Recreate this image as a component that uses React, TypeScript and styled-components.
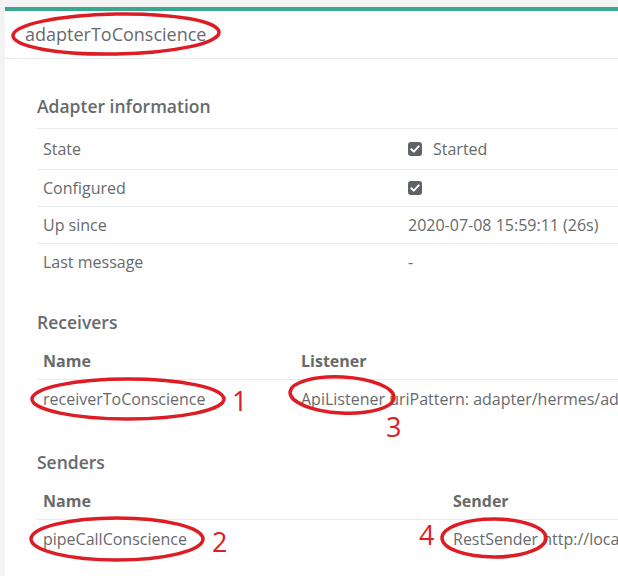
import styled, { createGlobalStyle } from 'styled-components';

const GlobalStyle = createGlobalStyle`
  html, body {
    margin: 0;
    padding: 0;
    background: #f3f3f4;
    overflow: hidden;
  }
  body {
    font-family: "Open Sans", "Liberation Sans", sans-serif;
    color: #676a6c;
  }
`;

const Page = styled.div`
  position: relative;
  display: flex;
  flex-direction: column;
  width: 618px;
  height: 576px;
  padding: 7px 0 0 5px;
  box-sizing: border-box;
  overflow: hidden;
`;

const Panel = styled.div`
  flex: 1;
  width: 760px;
  background: #fff;
  border-top: 4px solid #38a98e;
`;

const PanelHeader = styled.div`
  padding: 12px 20px 12px;
  border-bottom: 1px solid #e7eaec;
`;

const PanelTitle = styled.h5`
  margin: 0;
  font-size: 18px;
  font-weight: 400;
  line-height: 23px;
`;

const Content = styled.div`
  padding: 35px 0 0 32px;
`;

const Section = styled.section<{ $gap: number }>`
  margin-bottom: ${(p) => p.$gap}px;
`;

const Heading = styled.h4`
  margin: 0 0 10px;
  font-size: 17.5px;
  font-weight: 600;
  line-height: 24px;
`;

const Table = styled.table`
  border-collapse: collapse;
  table-layout: fixed;
  width: 700px;
  font-size: 16px;
  white-space: nowrap;
`;

const Th = styled.th<{ $w?: number }>`
  text-align: left;
  font-weight: 700;
  padding: 7px 6px 8px;
  line-height: 20px;
  border-bottom: 1px solid #e7eaec;
  width: ${(p) => (p.$w ? `${p.$w}px` : 'auto')};
`;

const Td = styled.td<{ $w?: number; $pad?: number }>`
  padding: ${(p) => p.$pad ?? 8}px 6px;
  line-height: 20px;
  height: 20px;
  border-top: 1px solid #e7eaec;
  vertical-align: middle;
  overflow: hidden;
  width: ${(p) => (p.$w ? `${p.$w}px` : 'auto')};
`;

const BodyTd = styled(Td)`
  border-top: none;
  padding: 9px 6px;
`;

const CheckWrap = styled.span`
  display: inline-flex;
  align-items: center;
  gap: 11px;
  height: 20px;
  vertical-align: top;
`;

const Box = styled.span`
  display: inline-flex;
  align-items: center;
  justify-content: center;
  width: 14px;
  height: 14px;
  border-radius: 3px;
  background: #5f6266;
`;

const Overlay = styled.svg`
  position: absolute;
  left: 0;
  top: 0;
  pointer-events: none;
`;

const Mark = styled.span<{ $x: number; $y: number }>`
  position: absolute;
  left: ${(p) => p.$x}px;
  top: ${(p) => p.$y}px;
  font-family: "Open Sans", "Liberation Sans", sans-serif;
  font-size: 27px;
  line-height: 1;
  color: #dd1c24;
`;

const Check = ({ label }: { label?: string }) => (
  <CheckWrap>
    <Box>
      <svg width="10" height="8" viewBox="0 0 10 8">
        <path d="M1.3 4.2 L3.8 6.6 L8.7 1.4" fill="none" stroke="#fff" strokeWidth="2" strokeLinecap="round" strokeLinejoin="round" />
      </svg>
    </Box>
    {label}
  </CheckWrap>
);

const info = [
  { key: 'State', value: <Check label="Started" />, pad: 10 },
  { key: 'Configured', value: <Check />, pad: 8 },
  { key: 'Up since', value: '2020-07-08 15:59:11 (26s)', pad: 8 },
  { key: 'Last message', value: '-', pad: 8 },
];

const ellipses = [
  { cx: 116, cy: 34, rx: 103, ry: 20, rot: -1 },
  { cx: 128, cy: 399, rx: 96, ry: 20, rot: 0 },
  { cx: 342, cy: 395, rx: 52, ry: 18, rot: 3 },
  { cx: 117, cy: 539, rx: 86, ry: 21, rot: 0 },
  { cx: 494, cy: 538, rx: 52, ry: 19, rot: 0 },
];

const App = () => (
  <>
    <GlobalStyle />
    <Page>
      <Panel>
        <PanelHeader>
          <PanelTitle>adapterToConscience</PanelTitle>
        </PanelHeader>
        <Content>
          <Section $gap={30}>
            <Heading>Adapter information</Heading>
            <Table>
              <tbody>
                {info.map((row) => (
                  <tr key={row.key}>
                    <Td $w={353} $pad={row.pad}>{row.key}</Td>
                    <Td $pad={row.pad}>{row.value}</Td>
                  </tr>
                ))}
              </tbody>
            </Table>
          </Section>
          <Section $gap={32}>
            <Heading>Receivers</Heading>
            <Table>
              <thead>
                <tr>
                  <Th $w={246}>Name</Th>
                  <Th>Listener</Th>
                </tr>
              </thead>
              <tbody>
                <tr>
                  <BodyTd>receiverToConscience</BodyTd>
                  <BodyTd>ApiListener uriPattern: adapter/hermes/adapterToConscience</BodyTd>
                </tr>
              </tbody>
            </Table>
          </Section>
          <Section $gap={0}>
            <Heading>Senders</Heading>
            <Table>
              <thead>
                <tr>
                  <Th $w={398}>Name</Th>
                  <Th>Sender</Th>
                </tr>
              </thead>
              <tbody>
                <tr>
                  <BodyTd>pipeCallConscience</BodyTd>
                  <BodyTd>RestSender http://localhost/conscience</BodyTd>
                </tr>
              </tbody>
            </Table>
          </Section>
        </Content>
      </Panel>

      <Overlay width="618" height="576" viewBox="0 0 618 576">
        {ellipses.map((e, i) => (
          <ellipse
            key={i}
            cx={e.cx}
            cy={e.cy}
            rx={e.rx}
            ry={e.ry}
            transform={`rotate(${e.rot} ${e.cx} ${e.cy})`}
            fill="none"
            stroke="#dd1c24"
            strokeWidth="3.5"
          />
        ))}
      </Overlay>
      <Mark $x={232} $y={387}>1</Mark>
      <Mark $x={212} $y={528}>2</Mark>
      <Mark $x={386} $y={413}>3</Mark>
      <Mark $x={419} $y={521}>4</Mark>
    </Page>
  </>
);

export default App;
